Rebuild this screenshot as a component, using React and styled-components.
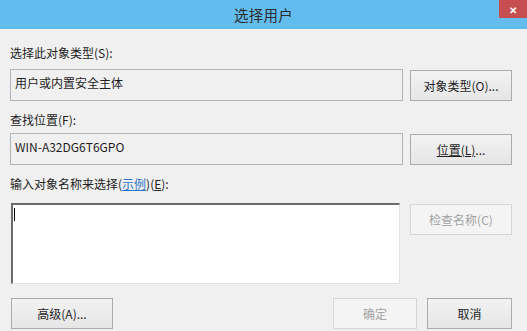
import styled, { createGlobalStyle } from "styled-components";

const GlobalStyle = createGlobalStyle`
  html, body {
    margin: 0;
    padding: 0;
    background: #f0f0f0;
  }
  body {
    font-family: "Noto Sans CJK SC", "Noto Sans", sans-serif;
    font-size: 12px;
    color: #1e1e1e;
  }
`;

const App = () => {
  return (
    <>
      <GlobalStyle />
      <Dialog>
        <TitleBar>
          <Title>选择用户</Title>
          <CloseButton>✕</CloseButton>
        </TitleBar>
        <Body>
          <Label $top={16}>选择此对象类型(S):</Label>
          <Row $top={8}>
            <Field>用户或内置安全主体</Field>
            <Button>对象类型(O)...</Button>
          </Row>
          <Label $top={11}>查找位置(F):</Label>
          <Row $top={5}>
            <Field>WIN-A32DG6T6GPO</Field>
            <Button>
              <u>位置(L)</u>...
            </Button>
          </Row>
          <Label $top={11}>
            输入对象名称来选择(<Link>示例</Link>)(<u>E</u>):
          </Label>
          <Row $top={11}>
            <TextArea>
              <Caret />
            </TextArea>
            <Button disabled>检查名称(C)</Button>
          </Row>
          <Footer>
            <Button $w={102}>高级(A)...</Button>
            <FooterRight>
              <Button $w={84} disabled>
                确定
              </Button>
              <Button $w={85}>取消</Button>
            </FooterRight>
          </Footer>
        </Body>
      </Dialog>
    </>
  );
};

export default App;

const Dialog = styled.div`
  width: 527px;
  height: 331px;
  display: flex;
  flex-direction: column;
  background: #f0f0f0;
  overflow: hidden;
`;

const TitleBar = styled.div`
  height: 29px;
  flex-shrink: 0;
  background: #62bdee;
  display: flex;
  align-items: center;
  justify-content: center;
  position: relative;
`;

const Title = styled.div`
  font-size: 14.5px;
  color: #2b2b2b;
  letter-spacing: 0.3px;
`;

const CloseButton = styled.div`
  position: absolute;
  top: 0;
  right: 0;
  width: 28px;
  height: 18px;
  background: #c74f4f;
  color: #fff;
  font-size: 10px;
  font-weight: bold;
  display: flex;
  align-items: center;
  justify-content: center;
`;

const Body = styled.div`
  flex: 1;
  display: flex;
  flex-direction: column;
  padding: 0 15px 0 10px;
`;

const Label = styled.div`
  margin-top: ${(p) => p.$top}px;
  height: 16px;
  line-height: 16px;
  font-size: 12px;
  color: #222;
`;

const Link = styled.span`
  color: #2b74c8;
  text-decoration: underline;
`;

const Row = styled.div`
  margin-top: ${(p) => p.$top}px;
  display: grid;
  grid-template-columns: 1fr 102px;
  column-gap: 7px;
  align-items: start;
`;

const Field = styled.div`
  height: 32px;
  box-sizing: border-box;
  border: 1px solid #b4b4b4;
  background: #f0f0f0;
  padding: 5px 4px;
  line-height: 16px;
  font-size: 12px;
  color: #1e1e1e;
`;

const TextArea = styled.div`
  margin-left: 1px;
  margin-right: 3px;
  height: 81px;
  box-sizing: border-box;
  background: #fff;
  border-top: 2px solid #6b6b6b;
  border-left: 2px solid #6b6b6b;
  border-right: 1px solid #e2e2e2;
  border-bottom: 1px solid #e2e2e2;
  padding: 3px 1px;
`;

const Caret = styled.div`
  width: 1px;
  height: 13px;
  background: #000;
`;

const Button = styled.div`
  width: ${(p) => (p.$w ? `${p.$w}px` : "auto")};
  height: 31px;
  margin-top: 1px;
  box-sizing: border-box;
  border: 1px solid ${(p) => (p.disabled ? "#d6d6d6" : "#acacac")};
  background: ${(p) =>
    p.disabled ? "#f4f4f4" : "linear-gradient(#f2f2f2, #e6e6e6)"};
  color: ${(p) => (p.disabled ? "#a3a3a3" : "#1e1e1e")};
  font-size: 12px;
  display: flex;
  align-items: center;
  justify-content: center;
`;

const Footer = styled.div`
  margin-top: 13px;
  display: flex;
  justify-content: space-between;
  align-items: center;
  padding-left: 1px;
`;

const FooterRight = styled.div`
  display: flex;
  gap: 10px;
`;
